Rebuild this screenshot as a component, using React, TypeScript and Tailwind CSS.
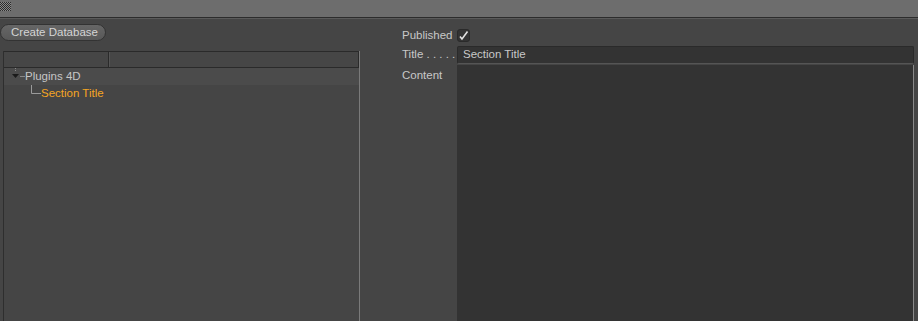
import React from "react";

export default function App() {
  const font = { fontFamily: '"Liberation Sans", Arial, sans-serif' };
  return (
    <div className="w-[918px] h-[321px] overflow-hidden bg-[#454545] flex flex-col text-[11.5px]" style={font}>
      {/* top bar */}
      <div className="h-[17px] bg-[#6d6d6d] flex items-start shrink-0">
        <svg width="11" height="9" className="mt-[2px]" viewBox="0 0 11 9">
          <defs>
            <pattern id="chk" width="2" height="2" patternUnits="userSpaceOnUse">
              <rect width="2" height="2" fill="#8a8a8a" />
              <rect width="1" height="1" fill="#2c2c2c" />
              <rect x="1" y="1" width="1" height="1" fill="#2c2c2c" />
            </pattern>
          </defs>
          <rect width="11" height="9" fill="url(#chk)" />
        </svg>
      </div>
      <div className="h-[1px] bg-[#2c2c2c] shrink-0" />
      <div className="h-[1px] bg-[#5a5a5a] shrink-0" />
      <div className="flex flex-1 min-h-0">
        {/* left */}
        <div className="w-[360px] flex flex-col shrink-0">
          <div className="pt-[5px] pl-0">
            <button className="h-[17px] w-[106px] rounded-full bg-gradient-to-b from-[#666] to-[#585858] border border-[#333] text-[#d4d4d4] text-[11.5px] leading-[15px] text-left pl-[10px]" style={font}>
              Create Database
            </button>
          </div>
          <div className="mt-[10px] ml-[3px] flex-1 flex flex-col border-l border-[#2e2e2e] border-r border-r-[#7a7a7a]">
            <div className="h-[17px] flex border border-[#2a2a2a] border-l-0 bg-[#464646]">
              <div className="w-[105px] border-r border-[#2a2a2a]" />
              <div className="flex-1 border-l border-[#555]" />
            </div>
            <div className="h-[17px] bg-[#4b4b4b] relative flex items-center text-[#c6c6c6]">
              <svg className="absolute left-[5px] top-0" width="20" height="17" viewBox="0 0 20 17">
                <line x1="6.5" y1="0" x2="6.5" y2="4" stroke="#8a8a8a" strokeDasharray="1 1" />
                <polygon points="3,6 10,6 6.5,10" fill="#1a1a1a" />
                <line x1="11" y1="8.5" x2="16" y2="8.5" stroke="#8a8a8a" />
              </svg>
              <span className="ml-[21px]">Plugins 4D</span>
            </div>
            <div className="h-[17px] relative flex items-center text-[#f5a623]">
              <svg className="absolute left-[24px] top-0" width="16" height="17" viewBox="0 0 16 17">
                <polyline points="3.5,0 3.5,8.5 13,8.5" fill="none" stroke="#9a9a9a" />
              </svg>
              <span className="ml-[37px]">Section Title</span>
            </div>
            <div className="flex-1" />
          </div>
        </div>
        {/* right */}
        <div className="flex-1 flex flex-col pl-[42px] pr-[4px] pt-[9px] text-[#c8c8c8]">
          <div className="flex items-center h-[15px]">
            <span className="w-[55px]">Published</span>
            <div className="w-[13px] h-[13px] rounded-[3px] bg-[#333] border border-[#2a2a2a] flex items-center justify-center">
              <svg width="11" height="11" viewBox="0 0 11 11">
                <path d="M2 6.5 L4 9 L9.5 1.5" fill="none" stroke="#e0e0e0" strokeWidth="1.6" />
              </svg>
            </div>
          </div>
          <div className="flex items-center h-[18px] mt-[3px]">
            <span className="w-[55px] whitespace-nowrap">Title . . . . .</span>
            <div className="flex-1 h-[18px] bg-[#333] border border-[#2a2a2a] border-b-[#555] rounded-[2px] pl-[5px] flex items-center text-[#c8c8c8]">
              Section Title
            </div>
          </div>
          <div className="flex flex-1 mt-[1px]">
            <span className="w-[55px] pt-[2px]">Content</span>
            <div className="flex-1 bg-[#333] border-r border-[#8a8a8a]" />
          </div>
        </div>
      </div>
    </div>
  );
}
